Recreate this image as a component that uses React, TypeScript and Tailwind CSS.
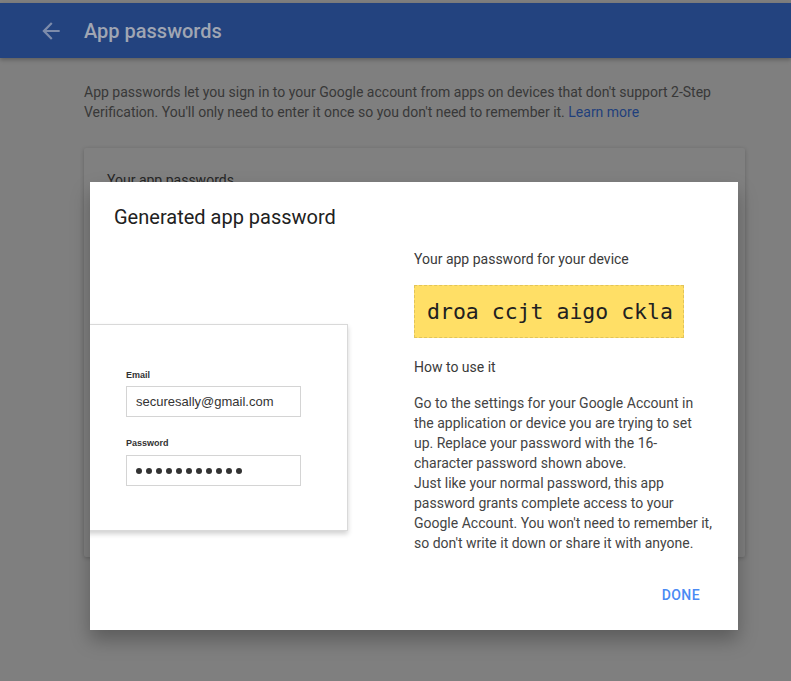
import { ReactNode } from "react"

function Line({ children }: { children: ReactNode }) {
  return <span className="block whitespace-nowrap">{children}</span>
}

function LoginIllustration() {
  return (
    <div className="mt-[75px] -ml-[20px] w-[278px] h-[207px] bg-white border border-[#d9d9d9] shadow-[0_3px_5px_rgba(0,0,0,0.18)] pl-[55px] pt-[44px] font-['Liberation_Sans',Arial,sans-serif]">
      <div className="text-[9px] leading-[12px] font-bold text-[#333]">Email</div>
      <div className="mt-[5px] w-[175px] h-[31px] border border-[#d4d4d4] pl-[9px] flex items-center text-[13px] text-[#333]">
        securesally@gmail.com
      </div>
      <div className="mt-[20px] text-[9px] leading-[12px] font-bold text-[#333]">Password</div>
      <div className="mt-[6px] w-[175px] h-[31px] border border-[#d4d4d4] pl-[9px] flex items-center gap-[4px]">
        {[...Array(11)].map((_, i) => (
          <span key={i} className="w-[6px] h-[6px] rounded-full bg-[#333]" />
        ))}
      </div>
    </div>
  )
}

export default function App() {
  return (
    <div className="relative w-full h-[681px] overflow-hidden bg-[#7f7f7f] font-['Roboto',Arial,sans-serif]">
      {/* Header */}
      <div className="mt-[3px] h-[55px] bg-[#23437f] flex items-center shadow-[0_2px_4px_rgba(0,0,0,0.25)]">
        <svg viewBox="0 0 24 24" width="26" height="26" className="ml-[38px]" fill="#7d8cab">
          <path d="M20 11H7.83l5.59-5.59L12 4l-8 8 8 8 1.41-1.41L7.83 13H20v-2z" />
        </svg>
        <h1 className="ml-[20px] text-[20px] font-medium text-[#a0a6b3]">App passwords</h1>
      </div>

      {/* Page content (behind dialog) */}
      <div className="pl-[84px] w-[745px]">
        <p className="mt-[24px] text-[14px] leading-[20px] text-[#383838]">
          <Line>App passwords let you sign in to your Google account from apps on devices that don't support 2-Step</Line>
          <Line>
            Verification. You'll only need to enter it once so you don't need to remember it.{" "}
            <span className="text-[#1f3f7c]">Learn more</span>
          </Line>
        </p>
        <div className="mt-[26px] h-[409px] bg-[#808080] rounded-[2px] shadow-[0_1px_4px_rgba(0,0,0,0.22)] pl-[23px] pt-[22px]">
          <div className="text-[14px] leading-[20px] text-[#262626]">Your app passwords</div>
        </div>
      </div>

      {/* Dialog */}
      <div className="absolute left-[90px] top-[182px] w-[648px] h-[448px] bg-white overflow-hidden shadow-[0_10px_18px_rgba(0,0,0,0.28)]">
        <h2 className="pl-6 pt-[21px] text-[20px] leading-7 text-[#212121]">Generated app password</h2>
        <div className="flex mt-[18px]">
          <div className="w-[324px] shrink-0">
            <LoginIllustration />
          </div>
          <div className="w-[310px] text-[14px] leading-[20px] text-[#3a3a3a]">
            <div>Your app password for your device</div>
            <div className="mt-[16px] w-[270px] h-[53px] bg-[#ffdf66] border border-dashed border-[#e2c45a] pl-[12px] flex items-center font-['DejaVu_Sans_Mono',monospace] text-[21.5px] text-[#212121]">
              droa ccjt aigo ckla
            </div>
            <div className="mt-[19px]">How to use it</div>
            <p className="mt-[16px] text-[#444]">
              <Line>Go to the settings for your Google Account in</Line>
              <Line>the application or device you are trying to set</Line>
              <Line>up. Replace your password with the 16-</Line>
              <Line>character password shown above.</Line>
              <Line>Just like your normal password, this app</Line>
              <Line>password grants complete access to your</Line>
              <Line>Google Account. You won't need to remember it,</Line>
              <Line>so don't write it down or share it with anyone.</Line>
            </p>
          </div>
        </div>
        <div className="flex justify-end mt-[24px] pr-[30px]">
          <button className="h-9 px-2 text-[14px] font-medium tracking-[0.03em] text-[#4a8af4]">DONE</button>
        </div>
      </div>
    </div>
  )
}
